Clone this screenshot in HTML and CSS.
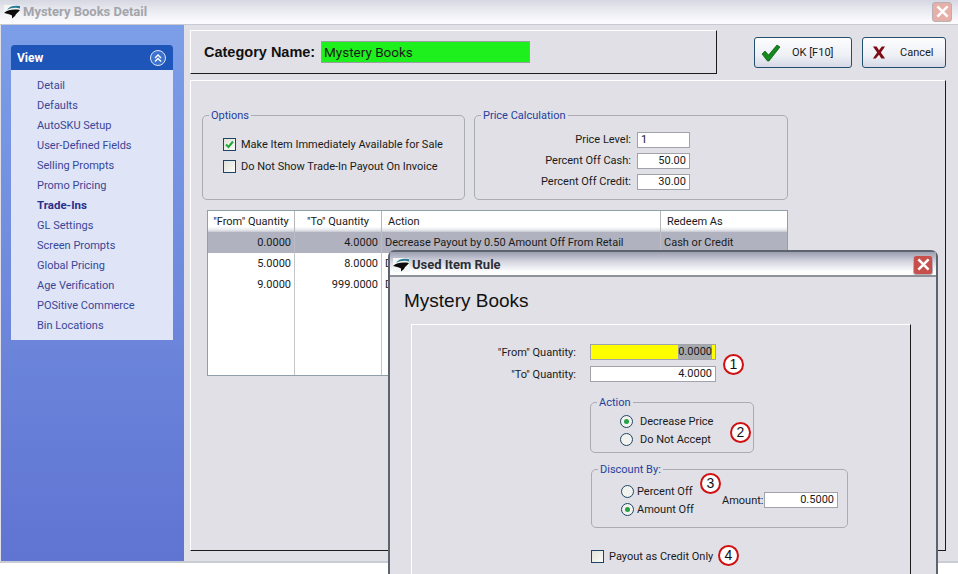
FILE: index.html
```html
<!DOCTYPE html>
<html lang="en">
<head>
  <meta charset="UTF-8" />
  <title>Mystery Books Detail</title>
  <link rel="stylesheet" href="styles.css">
</head>
<body>
  <svg class="defs" width="0" height="0">
    <symbol id="logo" viewBox="0 0 16 14">
      <rect width="16" height="14" fill="#f4f6f6"/>
      <path d="M3 5C5 1 10 0 16 1L16 3.500C11 2 7 3 3 5Z" fill="#2a7c94"/>
      <path d="M0 8C4 4.500 10 4 16 5C14 7.500 12 8.500 11 11L8 13.500L8 10.500C5 9 3 8.500 0 8Z" fill="#0c0c0c"/>
    </symbol>
    <symbol id="cross" viewBox="0 0 20 20">
      <path d="M4 4L16 16M16 4L4 16" stroke="#fff" stroke-width="3" fill="none"/>
    </symbol>
  </svg>

  <div class="window">
    <div class="titlebar">
      <svg class="logo"><use href="#logo"/></svg>
      <span class="title-text">Mystery Books Detail</span>
      <span class="close close-idle"><svg width="17" height="17"><use href="#cross"/></svg></span>
    </div>

    <div class="window-body">
      <aside class="sidebar">
        <div class="nav-card">
          <div class="nav-head">
            <span>View</span>
            <span class="nav-toggle">
              <svg width="10" height="10" viewBox="0 0 10 10"><path d="M2 5L5 2L8 5M2 8.500L5 5.500L8 8.500" stroke="#fff" stroke-width="1.400" fill="none"/></svg>
            </span>
          </div>
          <ul class="nav-list">
            <li>Detail</li>
            <li>Defaults</li>
            <li>AutoSKU Setup</li>
            <li>User-Defined Fields</li>
            <li>Selling Prompts</li>
            <li>Promo Pricing</li>
            <li class="active">Trade-Ins</li>
            <li>GL Settings</li>
            <li>Screen Prompts</li>
            <li>Global Pricing</li>
            <li>Age Verification</li>
            <li>POSitive Commerce</li>
            <li>Bin Locations</li>
          </ul>
        </div>
      </aside>

      <main class="content">
        <div class="top-row">
          <div class="panel category">
            <label class="category-label">Category Name:</label>
            <div class="category-input">Mystery Books</div>
          </div>
          <div class="actions">
            <button class="btn btn-ok">
              <svg width="20" height="18" viewBox="0 0 20 18"><path d="M1 10L4 7L7.500 11L16 1L19 3L8 17L6.500 17Z" fill="#128a1c" stroke="#0b4d12" stroke-width="0.700"/></svg>
              <span>OK [F10]</span>
            </button>
            <button class="btn btn-cancel">
              <svg width="14" height="15" viewBox="0 0 15 15"><path d="M1 1H5L7.500 5L10.500 1H14L9.500 7.500L14 14H10L7.500 10L4 14H1L5.500 7.500Z" fill="#7f0c14"/></svg>
              <span>Cancel</span>
            </button>
          </div>
        </div>

        <div class="panel main-panel">
          <div class="group-row">
            <fieldset class="group options">
              <legend>Options</legend>
              <div class="check-row"><span class="checkbox"><svg width="11" height="11" viewBox="0 0 11 11"><path d="M2 5.500L4.500 8L9 2.500" stroke="#22a838" stroke-width="2" fill="none"/></svg></span>Make Item Immediately Available for Sale</div>
              <div class="check-row"><span class="checkbox"></span>Do Not Show Trade-In Payout On Invoice</div>
            </fieldset>
            <fieldset class="group price">
              <legend>Price Calculation</legend>
              <div class="price-row"><span>Price Level:</span><div class="field field-left">1</div></div>
              <div class="price-row"><span>Percent Off Cash:</span><div class="field">50.00</div></div>
              <div class="price-row"><span>Percent Off Credit:</span><div class="field">30.00</div></div>
            </fieldset>
          </div>

          <table class="rules">
            <thead>
              <tr><th class="th-sep">"From" Quantity</th><th class="th-sep">"To" Quantity</th><th class="th-sep th-left">Action</th><th class="th-left">Redeem As</th></tr>
            </thead>
            <tbody>
              <tr class="selected"><td class="num">0.0000</td><td class="num">4.0000</td><td>Decrease Payout by 0.50 Amount Off From Retail</td><td>Cash or Credit</td></tr>
              <tr><td class="num">5.0000</td><td class="num">8.0000</td><td>Decrease Payout by 0.25 Amount Off From Retail</td><td>Cash or Credit</td></tr>
              <tr><td class="num">9.0000</td><td class="num">999.0000</td><td>Decrease Payout by 0.10 Amount Off From Retail</td><td>Cash or Credit</td></tr>
              <tr class="filler"><td></td><td></td><td></td><td></td></tr>
            </tbody>
          </table>
        </div>
      </main>
    </div>
  </div>

  <!-- dialog floats over the main window -->
  <section class="dialog">
    <div class="dialog-title">
      <svg class="logo"><use href="#logo"/></svg>
      <span>Used Item Rule</span>
      <span class="close"><svg width="17" height="17"><use href="#cross"/></svg></span>
    </div>
    <div class="dialog-body">
      <h2>Mystery Books</h2>
      <div class="dialog-panel">
        <div class="qty-row"><span>"From" Quantity:</span><div class="field qty qty-active"><span class="sel-text">0.0000</span></div></div>
        <div class="qty-row"><span>"To" Quantity:</span><div class="field qty">4.0000</div></div>

        <fieldset class="group action-group">
          <legend>Action</legend>
          <div class="radio-row"><span class="radio on"></span>Decrease Price</div>
          <div class="radio-row"><span class="radio"></span>Do Not Accept</div>
        </fieldset>

        <fieldset class="group discount-group">
          <legend>Discount By:</legend>
          <div class="discount-inner">
            <div class="discount-radios">
              <div class="radio-row"><span class="radio"></span>Percent Off</div>
              <div class="radio-row"><span class="radio on"></span>Amount Off</div>
            </div>
            <div class="amount"><span class="amount-label">Amount:</span><div class="field amount-field">0.5000</div></div>
          </div>
        </fieldset>

        <div class="check-row payout"><span class="checkbox"></span>Payout as Credit Only</div>

        <span class="marker m1">1</span>
        <span class="marker m2">2</span>
        <span class="marker m3">3</span>
        <span class="marker m4">4</span>
      </div>
    </div>
  </section>
</body>
</html>
```

FILE: styles.css
```css
* { box-sizing: border-box; }
html, body {
  margin: 0;
  height: 574px;
  overflow: hidden;
}
body {
  position: relative;
  background: #fff;
  font-family: Roboto, 'Liberation Sans', sans-serif;
  font-size: 11px;
  color: #1a1a1a;
}
.defs { position: absolute; }
.logo {
  width: 16px;
  height: 14px;
  flex: none;
}

/* main window */
.window {
  height: 563px;
  background: #e0e0e6;
  border-bottom: 2px solid #c9ccd2;
  display: flex;
  flex-direction: column;
}
.titlebar {
  height: 25px;
  flex: none;
  display: flex;
  align-items: center;
  gap: 3px;
  padding: 0 6px 1px 4px;
  background: linear-gradient(#d5d7e2, #e6e7ee 35%, #fbfbfd 90%);
  border-bottom: 1px solid #c8cad0;
}
.title-text {
  font-size: 13px;
  font-weight: bold;
  color: #a2a4aa;
}
.close {
  margin-left: auto;
  width: 20px;
  height: 20px;
  border-radius: 3px;
  background: #c8504c;
  border: 1px solid #b8b0b8;
  display: flex;
  align-items: center;
  justify-content: center;
}
.close-idle { background: #e6b0a8; }

.window-body {
  flex: 1;
  display: flex;
  padding-left: 1px;
  min-height: 0;
}

/* left navigation */
.sidebar {
  width: 183px;
  flex: none;
  padding: 20px 10px 0;
  background: linear-gradient(#7c9ee8, #6074d2);
}
.nav-card {
  width: 162px;
  height: 295px;
  background: #dfe5f7;
  border-radius: 3px 3px 0 0;
}
.nav-head {
  height: 25px;
  padding: 0 7px 0 6px;
  display: flex;
  align-items: center;
  justify-content: space-between;
  background: #1d55b8;
  border-radius: 3px 3px 0 0;
  color: #fff;
  font-size: 12px;
  font-weight: bold;
}
.nav-toggle {
  width: 16px;
  height: 16px;
  border-radius: 50%;
  border: 1px solid #dfe8fb;
  background: #3e72cf;
  display: flex;
  align-items: center;
  justify-content: center;
}
.nav-list {
  list-style: none;
  margin: 0;
  padding: 5px 0 0 26px;
}
.nav-list li {
  height: 20px;
  line-height: 21px;
  color: #3a4698;
}
.nav-list .active {
  font-size: 11.500px;
  font-weight: bold;
  color: #2a2f8a;
}

/* content area */
.content {
  flex: 1;
  min-width: 0;
  padding: 5px 12px 0 6px;
  display: flex;
  flex-direction: column;
}
.panel {
  border-top: 1px solid #fff;
  border-left: 1px solid #fff;
  border-right: 1px solid #1c1c1c;
  border-bottom: 1px solid #1c1c1c;
}
.top-row {
  height: 44px;
  flex: none;
  display: flex;
}
.category {
  width: 527px;
  display: flex;
  align-items: center;
  gap: 5px;
  padding: 0 0 0 13px;
}
.category-label {
  width: 112px;
  font-family: 'Liberation Sans', sans-serif;
  font-size: 14.500px;
  font-weight: bold;
  white-space: nowrap;
  color: #111;
}
.category-input {
  width: 209px;
  height: 22px;
  line-height: 20px;
  padding-left: 2px;
  background: #1ef01e;
  border: 1px solid #9aa0a0;
  font-size: 13.500px;
}
.actions {
  display: flex;
  gap: 10px;
  padding: 7px 0 0 37px;
}
.btn {
  height: 31px;
  border: 1px solid #21506f;
  border-radius: 3px;
  background: linear-gradient(#fdfdfe, #eef0f6 60%, #d6d9e6);
  display: flex;
  align-items: center;
  font: inherit;
  color: #1a1a1a;
  padding: 0;
}
.btn-ok {
  width: 98px;
  padding-left: 6px;
  gap: 11px;
}
.btn-cancel {
  width: 84px;
  padding-left: 9px;
  gap: 14px;
}

.main-panel {
  margin-top: 6px;
  height: 471px;
  padding: 28px 0 0 11px;
}
.group-row {
  display: flex;
  gap: 9px;
}
.group {
  margin: 0;
  padding: 0;
  border: 1px solid #a9acb2;
  border-radius: 5px;
  min-width: 0;
}
.group legend {
  margin-left: 6px;
  padding: 0 2px;
  line-height: 13px;
  color: #1f3f9e;
}
.options {
  width: 263px;
  height: 91px;
  padding-top: 11px;
}
.check-row {
  height: 22px;
  display: flex;
  align-items: center;
  gap: 5px;
}
.options .check-row { margin-left: 20px; }
.checkbox {
  width: 13px;
  height: 13px;
  flex: none;
  border: 1px solid #1d4466;
  background: linear-gradient(135deg, #e2e2da, #fbfbf8);
  display: flex;
  align-items: center;
  justify-content: center;
}
.price {
  width: 314px;
  height: 91px;
  padding-top: 7px;
}
.price-row {
  height: 21px;
  display: flex;
  align-items: center;
  justify-content: flex-end;
  gap: 6px;
  padding-right: 97px;
}
.field {
  background: #fff;
  border: 1px solid #a0a4aa;
  height: 16px;
  line-height: 14px;
  text-align: right;
  padding: 0 3px;
}
.price-row .field { width: 53px; }
.field-left { text-align: left; }

.rules {
  margin: 10px 0 0 5px;
  width: 581px;
  height: 166px;
  border-collapse: separate;
  border-spacing: 0;
  table-layout: fixed;
  background: #fff;
  border: 1px solid #8fa0a8;
}
.rules th {
  height: 21px;
  font-weight: normal;
  padding: 0 3px;
  white-space: nowrap;
  background: linear-gradient(#fff 75%, #e6e8ec 90%, #c6c8d0);
}
.rules th.th-left { padding-left: 6px; }
.rules th:nth-child(1), .rules td:nth-child(1) { width: 87px; }
.rules th:nth-child(2), .rules td:nth-child(2) { width: 87px; }
.rules th:nth-child(3), .rules td:nth-child(3) { width: 279px; }
.th-sep { border-right: 1px solid #b4b8bc; }
.th-left { text-align: left; }
.rules td {
  height: 21px;
  padding: 0 3px;
  white-space: nowrap;
  overflow: hidden;
  border-right: 1px solid #c4c6c8;
}
.rules td:last-child { border-right: 0; }
.rules .num { text-align: right; }
.rules .selected td {
  background: #b0b2bf;
  border-right-color: #bcbec4;
}
.rules .filler td { height: auto; }

/* dialog window */
.dialog {
  position: absolute;
  left: 388px;
  top: 250px;
  width: 550px;
  height: 340px;
  background: #e0e0e6;
  border: 2px solid #5e646e;
  border-bottom: 0;
  border-radius: 7px 7px 0 0;
}
.dialog-title {
  height: 25px;
  display: flex;
  align-items: center;
  gap: 3px;
  padding: 2px 3px 0 3px;
  background: linear-gradient(#9c9eb2, #d8d9e2 45%, #fdfdfe 85%);
  border-bottom: 2px solid #8e9298;
  font-size: 13px;
  font-weight: bold;
  color: #2c2f38;
}
.dialog-body {
  padding: 0 0 0 14px;
}
.dialog-body h2 {
  margin: 0;
  height: 47px;
  padding-top: 13px;
  font-family: 'Liberation Sans', sans-serif;
  font-size: 19px;
  line-height: 21px;
  font-weight: normal;
  color: #111;
}
.dialog-panel {
  position: relative;
  margin-left: 7px;
  width: 500px;
  height: 260px;
  border-top: 1px solid #fff;
  border-left: 1px solid #fff;
  border-right: 1px solid #1c1c1c;
  padding: 16px 0 0 178px;
}
.qty-row {
  height: 22px;
  display: flex;
  align-items: center;
  position: relative;
}
.qty-row > span {
  position: absolute;
  right: calc(100% + 14px);
  white-space: nowrap;
}
.qty {
  width: 126px;
}
.qty-active {
  background: #ffff00;
}
.sel-text {
  background: #a6a8ac;
  display: inline-block;
  height: 14px;
}
.action-group {
  width: 164px;
  height: 57px;
  margin-top: 11px;
  padding-top: 3px;
}
.action-group .radio-row { margin-left: 29px; }
.radio-row {
  height: 18px;
  display: flex;
  align-items: center;
  gap: 7px;
}
.radio {
  width: 13px;
  height: 13px;
  flex: none;
  border-radius: 50%;
  border: 1px solid #1d4466;
  background: #f2f2ee;
  display: flex;
  align-items: center;
  justify-content: center;
}
.radio.on::after {
  content: "";
  width: 5px;
  height: 5px;
  border-radius: 50%;
  background: #28a048;
}
.discount-group {
  width: 257px;
  height: 65px;
  margin: 10px 0 0 1px;
  padding-top: 6px;
}
.discount-group .radio-row { gap: 3px; }
.discount-inner {
  margin-left: 29px;
  display: flex;
  align-items: center;
}
.discount-radios { width: 101px; }
.amount {
  display: flex;
  align-items: center;
  gap: 4px;
}
.amount-label { width: 38px; }
.amount-field { width: 74px; }
.payout {
  margin-top: 17px;
  margin-left: 1px;
}

/* numbered call-outs drawn on top of the form */
.marker {
  position: absolute;
  width: 21px;
  height: 21px;
  border-radius: 50%;
  border: 2px solid #d01010;
  background: #fff;
  color: #111;
  font-family: 'Liberation Sans', sans-serif;
  font-size: 14px;
  line-height: 17px;
  text-align: center;
}
.m1 { left: 311px; top: 29px; }
.m2 { left: 318px; top: 97px; }
.m3 { left: 288px; top: 148px; }
.m4 { left: 306px; top: 220px; }
```
